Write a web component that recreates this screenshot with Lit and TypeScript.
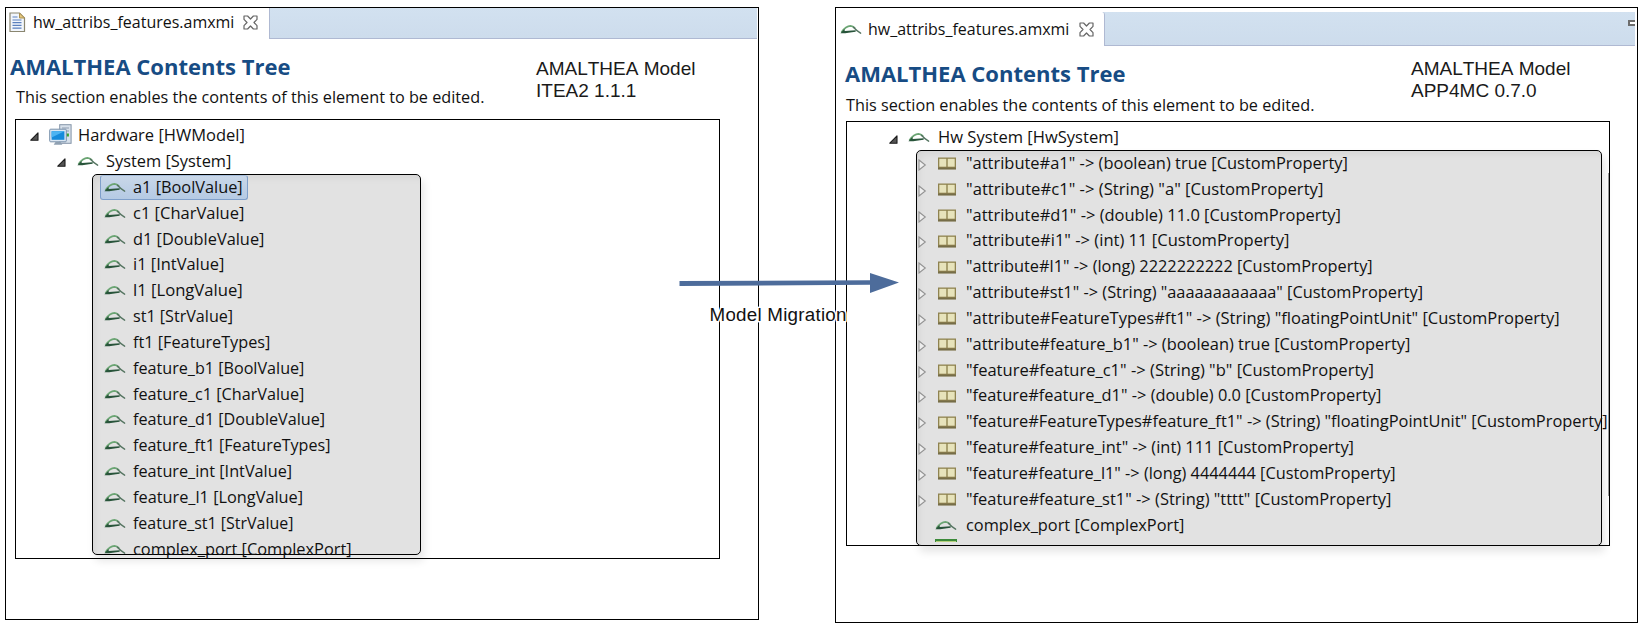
import { LitElement, html, svg, css } from "lit";
import { customElement, property } from "lit/decorators.js";

type Entry = { text: string; width: number };

const LEFT_ROWS: Entry[] = [
  { text: "a1 [BoolValue]", width: 108.3 },
  { text: "c1 [CharValue]", width: 110 },
  { text: "d1 [DoubleValue]", width: 130 },
  { text: "i1 [IntValue]", width: 90 },
  { text: "l1 [LongValue]", width: 108.3 },
  { text: "st1 [StrValue]", width: 98.7 },
  { text: "ft1 [FeatureTypes]", width: 136 },
  { text: "feature_b1 [BoolValue]", width: 170 },
  { text: "feature_c1 [CharValue]", width: 170 },
  { text: "feature_d1 [DoubleValue]", width: 190.7 },
  { text: "feature_ft1 [FeatureTypes]", width: 196 },
  { text: "feature_int [IntValue]", width: 157.7 },
  { text: "feature_l1 [LongValue]", width: 168.7 },
  { text: "feature_st1 [StrValue]", width: 159 },
  { text: "complex_port [ComplexPort]", width: 217.3 },
];

const RIGHT_ROWS: Entry[] = [
  { text: '"attribute#a1" -> (boolean) true [CustomProperty]', width: 380.6 },
  { text: '"attribute#c1" -> (String) "a" [CustomProperty]', width: 356 },
  { text: '"attribute#d1" -> (double) 11.0 [CustomProperty]', width: 373.6 },
  { text: '"attribute#i1" -> (int) 11 [CustomProperty]', width: 322 },
  { text: '"attribute#l1" -> (long) 2222222222 [CustomProperty]', width: 405.3 },
  { text: '"attribute#st1" -> (String) "aaaaaaaaaaaa" [CustomProperty]', width: 455.6 },
  { text: '"attribute#FeatureTypes#ft1" -> (String) "floatingPointUnit" [CustomProperty]', width: 592.3 },
  { text: '"attribute#feature_b1" -> (boolean) true [CustomProperty]', width: 443 },
  { text: '"feature#feature_c1" -> (String) "b" [CustomProperty]', width: 406.6 },
  { text: '"feature#feature_d1" -> (double) 0.0 [CustomProperty]', width: 414 },
  { text: '"feature#FeatureTypes#feature_ft1" -> (String) "floatingPointUnit" [CustomProperty]', width: 640.3 },
  { text: '"feature#feature_int" -> (int) 111 [CustomProperty]', width: 386.6 },
  { text: '"feature#feature_l1" -> (long) 4444444 [CustomProperty]', width: 428.3 },
  { text: '"feature#feature_st1" -> (String) "tttt" [CustomProperty]', width: 424 },
];

/* One line of text set to a fixed advance width. */
@customElement("fit-label")
class FitLabel extends LitElement {
  @property() text = "";
  @property({ type: Number }) width = 100;
  @property({ type: Number }) height = 26;
  @property({ type: Number }) baseline = 18;
  static styles = css`
    :host { display: block; flex: none; }
    svg { display: block; overflow: visible; }
    text { fill: currentColor; white-space: pre; }
  `;
  render() {
    const w = this.width + 1.4;
    return html`<svg width=${w} height=${this.height}>
      ${svg`<text x="-1" y=${this.baseline} textLength=${w} lengthAdjust="spacingAndGlyphs">${this.text}</text>`}
    </svg>`;
  }
}

const leaf = html`<svg class="leaf" width="22" height="11" viewBox="0 0 22 11">
  <path d="M1.5 8.2C4.5 4 7 2 10.5 1.9C12.5 1.9 13.8 3 15 4.2" fill="none" stroke="#6ba573" stroke-width="1.9" />
  <path d="M13.5 3.2C15.5 5.4 17.5 7.4 20.6 9.2" fill="none" stroke="#557561" stroke-width="1.5" stroke-linecap="round" />
  <path d="M0.4 9.2L4.4 5L4.8 7.1L15.8 6.3L15.6 7.7C10 8.2 5 9.6 0.4 9.2Z" fill="#28543a" />
</svg>`;

const book = html`<svg class="book" width="18" height="13" viewBox="0 0 18 13">
  <rect x="0" y="0.5" width="18" height="11.8" fill="#8f8350" />
  <rect x="1.3" y="1.8" width="7" height="7.9" fill="#e7e3bb" />
  <rect x="9.7" y="1.8" width="7" height="7.9" fill="#e7e3bb" />
  <rect x="0" y="10.6" width="18" height="1.8" fill="#756d48" />
</svg>`;

const opened = html`<svg class="opened" width="9" height="9" viewBox="0 0 9 9">
  <path d="M8 0.8V8.2H0.8Z" fill="#555" stroke="#1c1c1c" stroke-width="1.1" stroke-linejoin="round" />
</svg>`;

const closed = html`<svg class="closed" width="9" height="12" viewBox="0 0 9 12">
  <path d="M1 1L7.3 6L1 11Z" fill="#eee" stroke="#929292" stroke-width="1.1" />
</svg>`;

const close = html`<svg class="close" width="15" height="15" viewBox="0 0 15 15">
  <path d="M1 1H4.6L7.5 4L10.4 1H14V4.4L11 7.5L14 10.6V14H10.4L7.5 11L4.6 14H1V10.6L4 7.5L1 4.4Z" fill="#fff" stroke="#666" stroke-width="1.2" stroke-linejoin="round" />
</svg>`;

const file = html`<svg class="file" width="17" height="21" viewBox="0 0 17 21">
  <path d="M1 1H10.5L15.5 6V19.5H1Z" fill="#f2f6fc" stroke="#8a8670" stroke-width="1.2" />
  <path d="M10.5 1V6H15.5Z" fill="#e4c77e" stroke="#ab9150" />
  <path d="M3.5 5H8.5M3.5 8H12.5M3.5 10.7H12.5M3.5 13.4H12.5M3.5 16.1H12.5" stroke="#5b80bd" stroke-width="1.2" />
</svg>`;

const computer = html`<svg class="computer" width="23" height="22" viewBox="0 0 23 22">
  <rect x="10.7" y="0.7" width="11.4" height="18.6" fill="#d7e0ea" stroke="#8494a8" />
  <path d="M13 4H20M13 7H20" stroke="#8d9caf" stroke-width="1.2" />
  <rect x="17.3" y="9.5" width="2.6" height="3" fill="#37a332" />
  <rect x="0.7" y="5.2" width="16.6" height="12.6" rx="1" fill="#dbe7f3" stroke="#7890aa" />
  <rect x="2.6" y="7.2" width="12.8" height="8.6" fill="#168bdb" />
  <path d="M2.6 7.2H15.4L2.6 13.5Z" fill="#4db4f2" />
  <path d="M6.5 18H11.5L13.3 20.8H4.7Z" fill="#8fa0b2" />
</svg>`;

@customElement("app-root")
class AppRoot extends LitElement {
  static styles = css`
    :host {
      display: block;
      position: relative;
      width: 1646px;
      height: 634px;
      overflow: hidden;
      background: #fff;
      color: #111;
      font: 17px "Open Sans", "Noto Sans", sans-serif;
    }
    * { box-sizing: border-box; }
    svg { display: block; flex: none; }
    .page { display: flex; align-items: flex-start; gap: 76px; padding: 7px 0 0 5px; }
    .panel { border: 1px solid #000; flex: none; background: #fff; }
    .old { width: 754px; height: 613px; }
    .new { width: 803px; height: 616px; padding-top: 4px; }
    .bar { display: flex; background: linear-gradient(#d2e1f0, #cddcec); border-bottom: 1px solid #afb9d2; }
    .old .bar { height: 31px; margin-right: 1px; }
    .new .bar { height: 34px; margin-right: 2px; }
    .tab { display: flex; background: #fff; border-right: 1px solid #afb9d2; margin-bottom: -1px; }
    .old .tab { width: 264px; padding-left: 3px; }
    .new .tab { width: 269px; padding-left: 4px; border-top-right-radius: 3px; }
    .file { margin: 4px 8px 0 0; }
    .old .close { margin: 7px 0 0 8px; }
    .new .close { margin: 10px 0 0 8.5px; }
    .new .tab .leaf { margin: 12px 7.3px 0 0; }
    .minimise { width: 7px; height: 6px; border: 2px solid #6d6d6d; border-right: 0; background: #fff; margin: 8px 0 0 auto; }
    .head { display: grid; }
    .old .head { grid-template-columns: 530px 200px; height: 80px; }
    .new .head { grid-template-columns: 575px 200px; height: 75px; }
    .title { color: #174c84; font-weight: 700; font-size: 22px; }
    .old .title { margin-left: 5.3px; }
    .new .title { margin-left: 10.3px; }
    .old .desc { margin-left: 10.5px; }
    .new .desc { margin-left: 10.8px; }
    .caption { font: 19px/21.6px "Liberation Sans", Arial, sans-serif; font-kerning: none; color: #1a1a1a; }
    .old .caption { padding-top: 19px; }
    .new .caption { padding-top: 12px; }
    .tree { border: 1px solid #000; position: relative; }
    .old .tree { width: 705px; height: 440px; margin-left: 9px; padding-top: 3px; }
    .new .tree { width: 764px; height: 425px; margin-left: 10px; padding-top: 2.6px; }
    .row { display: flex; height: 25.84px; }
    .group {
      border: 1px solid #000;
      border-radius: 5px;
      background: #e2e2e2;
      box-shadow: 3px 6px 9px rgba(0, 0, 0, 0.1), inset 5px 6px 8px -4px rgba(0, 0, 0, 0.07);
    }
    .old .group { width: 329px; height: 381px; margin: -0.66px 0 0 76px; padding-left: 7px; }
    .new .group { width: 686px; height: 396px; margin: -0.44px 0 0 69px; }
    .group .row { white-space: nowrap; }
    .old .group .row { padding-left: 4px; }
    .group .leaf { margin: 7px 7.7px 0 0; }
    .old .group .row.selected {
      width: 148px;
      height: 24.84px;
      margin-bottom: 1px;
      padding-left: 3px;
      border: 1px solid #7f9fca;
      border-top-color: #a5bddb;
      border-radius: 3px;
      background: linear-gradient(#c9d7e8, #b5cae4);
    }
    .row.selected .leaf { margin-top: 6px; }
    .row.selected fit-label { margin-top: -1px; }
    .hardware { padding-left: 14px; }
    .hardware .opened { margin: 9px 10px 0 0; }
    .computer { margin: 1px 7px 0 0; }
    .system { padding-left: 41px; }
    .system .opened { margin: 9px 11px 0 0; }
    .system .leaf { margin: 7px 7.5px 0 0; }
    .hw { padding-left: 42px; }
    .hw .opened { margin: 10px 10px 0 0; }
    .hw .leaf { margin: 7px 9px 0 0; }
    .closed { margin: 8px 11px 0 1px; }
    .book { margin: 6.5px 11px 0 0; }
    .new .port { padding-left: 18px; }
    .new .port .leaf { margin-right: 9.5px; }
    .sliver { width: 22px; height: 3px; margin: 1px 0 0 18px; background: #b6cf7c; border: 1px solid #3c8a3a; border-top-width: 2px; border-bottom: 0; }
    .scroll { position: absolute; right: 0; top: 51px; width: 1px; height: 323px; background: #999; }
    .overlay { position: absolute; left: 660px; top: 262px; }
    .overlay text {
      font: 18.8px "Liberation Sans", Arial, sans-serif;
      fill: #111;
      stroke: #fff;
      stroke-width: 3px;
      paint-order: stroke;
      stroke-linejoin: round;
    }
  `;

  render() {
    return html`
      <div class="page">
        <section class="panel old">
          <div class="bar">
            <div class="tab">
              ${file}
              <fit-label text="hw_attribs_features.amxmi" .width=${200} .baseline=${19.5}></fit-label>
              ${close}
            </div>
          </div>
          <div class="head">
            <div>
              <fit-label class="title" text="AMALTHEA Contents Tree" .width=${279} .height=${46} .baseline=${36}></fit-label>
              <fit-label class="desc" text="This section enables the contents of this element to be edited." .width=${467} .baseline=${18.3}></fit-label>
            </div>
            <div class="caption">AMALTHEA Model<br />ITEA2 1.1.1</div>
          </div>
          <div class="tree">
            <div class="row hardware">
              ${opened}${computer}
              <fit-label text="Hardware [HWModel]" .width=${165.5}></fit-label>
            </div>
            <div class="row system">
              ${opened}${leaf}
              <fit-label text="System [System]" .width=${124}></fit-label>
            </div>
            <div class="group">
              ${LEFT_ROWS.map(
                (r, i) => html`<div class="row ${i === 0 ? "selected" : ""}">
                  ${leaf}<fit-label .text=${r.text} .width=${r.width} .baseline=${17.6}></fit-label>
                </div>`
              )}
            </div>
          </div>
        </section>

        <section class="panel new">
          <div class="bar">
            <div class="tab">
              ${leaf}
              <fit-label text="hw_attribs_features.amxmi" .width=${200} .baseline=${23}></fit-label>
              ${close}
            </div>
            <div class="minimise"></div>
          </div>
          <div class="head">
            <div>
              <fit-label class="title" text="AMALTHEA Contents Tree" .width=${279} .height=${46} .baseline=${36}></fit-label>
              <fit-label class="desc" text="This section enables the contents of this element to be edited." .width=${467} .baseline=${19}></fit-label>
            </div>
            <div class="caption">AMALTHEA Model<br />APP4MC 0.7.0</div>
          </div>
          <div class="tree">
            <div class="scroll"></div>
            <div class="row hw">
              ${opened}${leaf}
              <fit-label text="Hw System [HwSystem]" .width=${179.5} .baseline=${17.7}></fit-label>
            </div>
            <div class="group">
              ${RIGHT_ROWS.map(
                (r) => html`<div class="row">
                  ${closed}${book}<fit-label .text=${r.text} .width=${r.width} .baseline=${17.8}></fit-label>
                </div>`
              )}
              <div class="row port">
                ${leaf}<fit-label text="complex_port [ComplexPort]" .width=${217} .baseline=${17.8}></fit-label>
              </div>
              <div class="sliver"></div>
            </div>
          </div>
        </section>
      </div>

      <svg class="overlay" width="250" height="70" viewBox="660 262 250 70">
        <path d="M679.5 281.1L870 280.2V273L899 282.5L870 293V284.8L679.5 285.9Z" fill="#4d6c9b" />
        <text x="709.5" y="321" textLength="137">Model Migration</text>
      </svg>
    `;
  }
}
